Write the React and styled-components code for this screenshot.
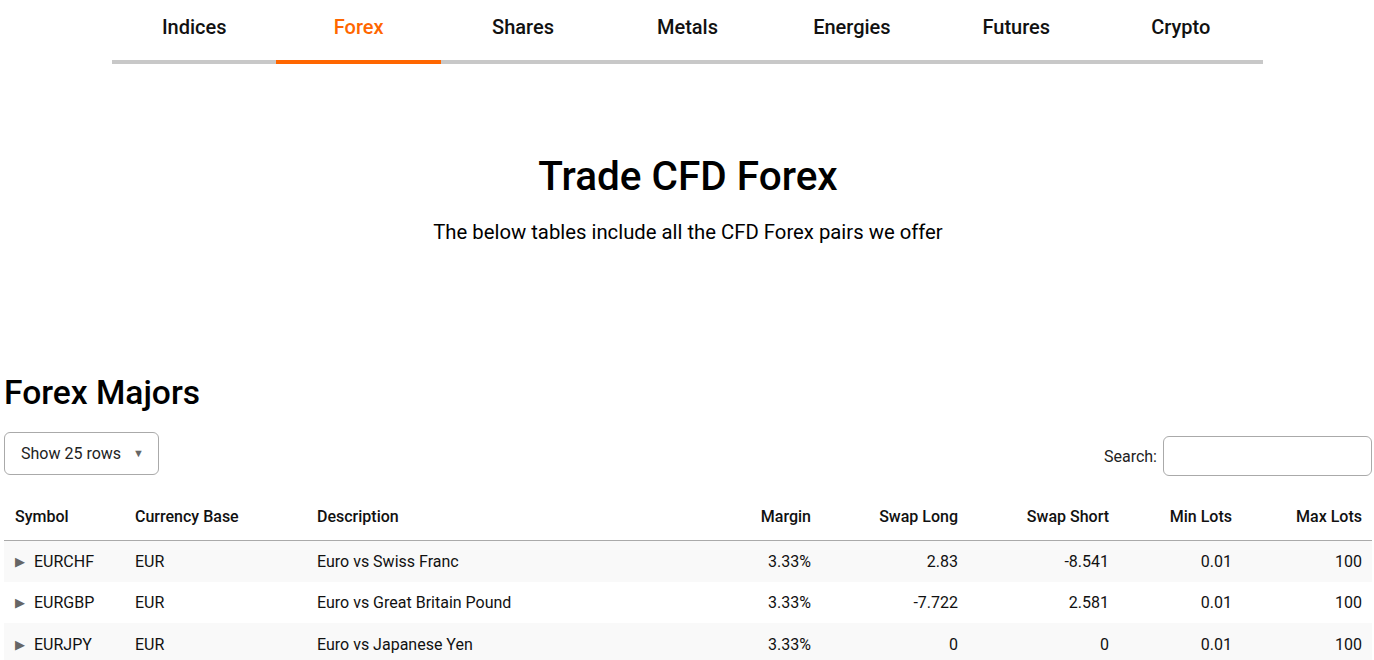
import React from "react";
import styled, { createGlobalStyle } from "styled-components";

const Global = createGlobalStyle`
  html, body { margin: 0; padding: 0; background: #fff; }
  body { font-family: Roboto, "Noto Sans", Arial, sans-serif; color: #000; }
  * { box-sizing: border-box; }
`;

const Page = styled.div`
  padding: 0 2px 0 4px;
`;

const TabBar = styled.nav`
  display: flex;
  width: 1151px;
  margin: 0 auto 0 108px;
`;

const Tab = styled.div`
  flex: 1;
  height: 64px;
  display: flex;
  align-items: flex-start;
  justify-content: center;
  padding-top: 15px;
  font-size: 20px;
  font-weight: 500;
  color: ${(p) => (p.$active ? "#ff6600" : "#111")};
  border-bottom: 4px solid ${(p) => (p.$active ? "#ff6600" : "#c8c8c8")};
`;

const Hero = styled.header`
  display: flex;
  flex-direction: column;
  align-items: center;
  padding-top: 88px;
  height: 306px;
`;

const Title = styled.h1`
  margin: 0;
  font-size: 40.5px;
  font-weight: 500;
  line-height: 48px;
`;

const Subtitle = styled.p`
  margin: 20px 0 0;
  font-size: 20.3px;
  line-height: 24px;
`;

const SectionTitle = styled.h2`
  margin: 0;
  font-size: 33.6px;
  font-weight: 500;
  line-height: 46px;
`;

const Controls = styled.div`
  display: flex;
  justify-content: space-between;
  align-items: flex-start;
  margin-top: 16px;
  height: 60px;
`;

const SelectBox = styled.div`
  display: flex;
  align-items: center;
  gap: 12px;
  width: 155px;
  height: 43px;
  padding: 0 15px 0 16px;
  border: 1px solid #aaa;
  border-radius: 6px;
  font-size: 16px;
  color: #222;
  white-space: nowrap;
`;

const Caret = styled.span`
  font-size: 11px;
  color: #666;
`;

const SearchWrap = styled.label`
  display: flex;
  align-items: center;
  gap: 6px;
  margin-top: 4px;
  font-size: 16px;
  color: #222;
`;

const SearchInput = styled.input`
  width: 209px;
  height: 40px;
  border: 1px solid #aaa;
  border-radius: 6px;
  outline: none;
  font: inherit;
`;

const Table = styled.table`
  width: 1368px;
  border-collapse: collapse;
  table-layout: fixed;
  font-size: 16px;
`;

const Th = styled.th`
  text-align: ${(p) => (p.$right ? "right" : "left")};
  font-weight: 500;
  padding: 2px 10px 0 ${(p) => (p.$first ? "11px" : "10px")};
  height: 48px;
  vertical-align: middle;
  border-bottom: 1px solid #aaa;
  color: #111;
`;

const Tr = styled.tr`
  background: ${(p) => (p.$odd ? "#f9f9f9" : "#fff")};
`;

const Td = styled.td`
  text-align: ${(p) => (p.$right ? "right" : "left")};
  padding: 0 10px 0 ${(p) => (p.$first ? "11px" : "10px")};
  height: 41.7px;
  color: #111;
`;

const Arrow = styled.span`
  display: inline-block;
  width: 19px;
  font-size: 13px;
  color: #666;
  vertical-align: 1px;
`;

const tabs = ["Indices", "Forex", "Shares", "Metals", "Energies", "Futures", "Crypto"];

const cols = [
  { label: "Symbol", w: 121 },
  { label: "Currency Base", w: 182 },
  { label: "Description", w: 400 },
  { label: "Margin", w: 114, right: true },
  { label: "Swap Long", w: 147, right: true },
  { label: "Swap Short", w: 151, right: true },
  { label: "Min Lots", w: 123, right: true },
  { label: "Max Lots", w: 130, right: true },
];

const rows = [
  ["EURCHF", "EUR", "Euro vs Swiss Franc", "3.33%", "2.83", "-8.541", "0.01", "100"],
  ["EURGBP", "EUR", "Euro vs Great Britain Pound", "3.33%", "-7.722", "2.581", "0.01", "100"],
  ["EURJPY", "EUR", "Euro vs Japanese Yen", "3.33%", "0", "0", "0.01", "100"],
];

export default function App() {
  return (
    <>
      <Global />
      <Page>
        <TabBar>
          {tabs.map((t) => (
            <Tab key={t} $active={t === "Forex"}>{t}</Tab>
          ))}
        </TabBar>
        <Hero>
          <Title>Trade CFD Forex</Title>
          <Subtitle>The below tables include all the CFD Forex pairs we offer</Subtitle>
        </Hero>
        <SectionTitle>Forex Majors</SectionTitle>
        <Controls>
          <SelectBox>
            Show 25 rows <Caret>▼</Caret>
          </SelectBox>
          <SearchWrap>
            Search: <SearchInput type="text" />
          </SearchWrap>
        </Controls>
        <Table>
          <colgroup>
            {cols.map((c) => (
              <col key={c.label} style={{ width: c.w }} />
            ))}
          </colgroup>
          <thead>
            <tr>
              {cols.map((c, j) => (
                <Th key={c.label} $right={c.right} $first={j === 0}>{c.label}</Th>
              ))}
            </tr>
          </thead>
          <tbody>
            {rows.map((r, i) => (
              <Tr key={r[0]} $odd={i % 2 === 0}>
                {r.map((v, j) => (
                  <Td key={j} $right={cols[j].right} $first={j === 0}>
                    {j === 0 && <Arrow>▶</Arrow>}
                    {v}
                  </Td>
                ))}
              </Tr>
            ))}
          </tbody>
        </Table>
      </Page>
    </>
  );
}
